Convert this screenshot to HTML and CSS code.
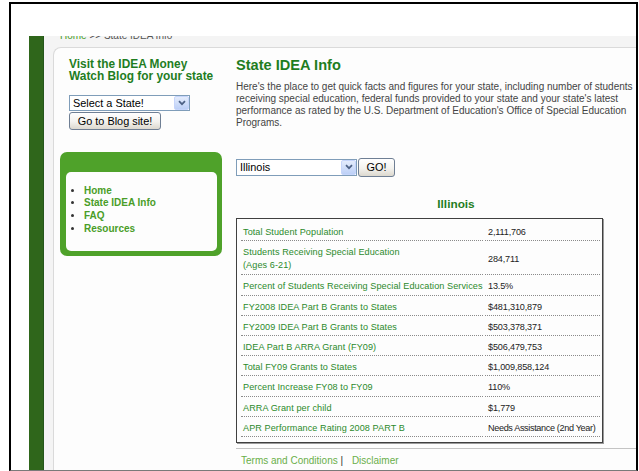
FILE: index.html
```html
<!DOCTYPE html>
<html lang="en">
<head>
<meta charset="utf-8">
<title>State IDEA Info</title>
<link rel="stylesheet" href="styles.css">
</head>
<body>
<div class="frame">
  <div class="blank"></div>
  <div class="page">
    <div class="rail"></div>
    <div class="site">
      <div class="crumb"><a href="#">Home</a> &gt;&gt; State IDEA Info</div>
      <div class="panel">
        <aside class="side">
          <h2 class="blog-title">Visit the IDEA Money Watch Blog for your state</h2>
          <div class="combo combo-side">
            <span class="combo-text">Select a State!</span>
            <span class="drop"><svg width="8" height="6" viewBox="0 0 8 6"><path d="M1 1.2 L4 4.2 L7 1.2" fill="none" stroke="#4d6185" stroke-width="1.7"/></svg></span>
          </div>
          <button class="btn btn-blog" type="button">Go to Blog site!</button>
          <nav class="menu">
            <div class="menu-inner">
              <ul>
                <li><a href="#">Home</a></li>
                <li><a href="#">State IDEA Info</a></li>
                <li><a href="#">FAQ</a></li>
                <li><a href="#">Resources</a></li>
              </ul>
            </div>
          </nav>
        </aside>
        <main class="main">
          <h1 class="title">State IDEA Info</h1>
          <p class="intro">Here's the place to get quick facts and figures for your state, including number of students receiving special education, federal funds provided to your state and your state's latest performance as rated by the U.S. Department of Education's Office of Special Education Programs.</p>
          <div class="picker">
            <div class="combo combo-main">
              <span class="combo-text">Illinois</span>
              <span class="drop"><svg width="8" height="6" viewBox="0 0 8 6"><path d="M1 1.2 L4 4.2 L7 1.2" fill="none" stroke="#4d6185" stroke-width="1.7"/></svg></span>
            </div>
            <button class="btn btn-go" type="button">GO!</button>
          </div>
          <h3 class="state-name">Illinois</h3>
          <div class="facts">
            <div class="cell lbl">Total Student Population</div>
            <div class="cell val">2,111,706</div>
            <div class="cell lbl">Students Receiving Special Education<br>(Ages 6-21)</div>
            <div class="cell val">284,711</div>
            <div class="cell lbl">Percent of Students Receiving Special Education Services</div>
            <div class="cell val">13.5%</div>
            <div class="cell lbl">FY2008 IDEA Part B Grants to States</div>
            <div class="cell val">$481,310,879</div>
            <div class="cell lbl">FY2009 IDEA Part B Grants to States</div>
            <div class="cell val">$503,378,371</div>
            <div class="cell lbl">IDEA Part B ARRA Grant (FY09)</div>
            <div class="cell val">$506,479,753</div>
            <div class="cell lbl">Total FY09 Grants to States</div>
            <div class="cell val">$1,009,858,124</div>
            <div class="cell lbl">Percent Increase FY08 to FY09</div>
            <div class="cell val">110%</div>
            <div class="cell lbl">ARRA Grant per child</div>
            <div class="cell val">$1,779</div>
            <div class="cell lbl">APR Performance Rating 2008 PART B</div>
            <div class="cell val val-long">Needs Assistance (2nd Year)</div>
          </div>
          <div class="foot"><a href="#">Terms and Conditions</a> | <a href="#" class="foot-second">Disclaimer</a></div>
        </main>
      </div>
    </div>
  </div>
</div>
</body>
</html>
```
FILE: styles.css
```css
* { box-sizing: border-box; }

body {
  margin: 0;
  background: #fff;
  font-family: "Liberation Sans", Arial, sans-serif;
}

a { text-decoration: none; }

/* window frame around the page */
.frame {
  margin: 2px 0 0 9px;
  width: 629px;
  height: 469px;
  border: 2px solid #000;
  border-bottom: 1px solid #7a7a7a;
  background: #fff;
  overflow: hidden;
  display: flex;
  flex-direction: column;
}

.blank { height: 32px; flex: none; }

.page {
  flex: 1;
  min-height: 0;
  display: flex;
  margin-left: 18px;
}

.rail {
  width: 15px;
  flex: none;
  background: #2f661b;
  box-shadow: inset -1px 0 #24561a;
}

.site {
  flex: none;
  width: 720px;
  background: #f4f4f4;
  padding-left: 9px;
  display: flex;
  flex-direction: column;
  overflow: hidden;
}

.crumb {
  flex: none;
  margin-top: -6px;
  height: 17px;
  padding-left: 7px;
  font-size: 10px;
  line-height: 12px;
  color: #555;
}
.crumb a { color: #4a9d28; }

.panel {
  flex: 1;
  display: flex;
  align-items: flex-start;
  padding-left: 6px;
  background: #fdfdfd;
  border-top: 1px solid #dadada;
  border-left: 1px solid #dadada;
  border-top-left-radius: 8px;
}

/* left column */
.side {
  width: 162px;
  flex: none;
  padding-top: 10px;
}

.blog-title {
  margin: 0 0 0 9px;
  font-size: 11.9px;
  line-height: 12px;
  font-weight: bold;
  color: #1f7d1f;
}

.combo {
  display: flex;
  align-items: center;
  width: 121px;
  background: #fff;
  border: 1px solid #7f9db9;
  font-size: 10.9px;
  color: #000;
  padding-left: 3px;
}
.combo-text { flex: 1; }
.combo-side { height: 16px; margin: 13px 0 0 9px; }
.combo-main { height: 17px; }

.drop {
  width: 15px;
  height: 100%;
  display: flex;
  align-items: center;
  justify-content: center;
  background: linear-gradient(#e4ecfc, #bdd0f7);
  border: 1px solid #c6d5fb;
  border-radius: 2px;
}

.btn {
  display: block;
  height: 18px;
  padding: 0;
  font-family: "Liberation Sans", Arial, sans-serif;
  font-size: 10.9px;
  color: #000;
  border: 1px solid #6f7f94;
  border-radius: 3px;
  background: linear-gradient(#ffffff, #f3f2ee 55%, #dcd8ce);
}
.btn-blog { width: 92px; margin: 1px 0 0 9px; }
.btn-go { width: 37px; height: 19px; }

.menu {
  margin-top: 22px;
  width: 162px;
  background: #4fa22a;
  border-radius: 7px;
  padding: 20px 5px 5px 6px;
}
.menu-inner {
  background: #fdfdfd;
  border-radius: 5px;
  padding: 12.5px 0 15px;
}
.menu ul {
  margin: 0;
  padding-left: 18px;
  list-style: disc;
}
.menu li {
  font-size: 10px;
  line-height: 12.9px;
  font-weight: bold;
  color: #333;
}
.menu a { color: #4a9d28; }

/* main column */
.main {
  width: 440px;
  flex: none;
  margin-left: 14px;
  padding-top: 9px;
}

.title {
  margin: 0;
  font-size: 14.6px;
  line-height: 17px;
  font-weight: bold;
  color: #1f7d1f;
}

.intro {
  margin: 6.5px 0 0;
  width: 404px;
  font-size: 10px;
  line-height: 12.3px;
  color: #444;
}

.picker {
  margin-top: 28px;
  display: flex;
  align-items: center;
  gap: 1px;
}

.state-name {
  margin: 20px 0 7px;
  text-align: center;
  font-size: 11.8px;
  line-height: 14px;
  font-weight: bold;
  color: #1f7d1f;
}

.facts {
  width: 367px;
  display: grid;
  grid-template-columns: 242px 115px;
  column-gap: 2px;
  padding: 2px 2px 5px 4px;
  border: 1px solid #404040;
  box-shadow: 1px 1px 0 #9a9a9a;
}

.cell {
  padding: 5px 0 1px 2px;
  font-size: 9.1px;
  line-height: 13.2px;
  white-space: nowrap;
  border-bottom: 1px dotted #8a8a8a;
}
.lbl { color: #2b8a2b; letter-spacing: 0.08px; }
.lbl:nth-child(3) { padding-bottom: 2px; }
.val {
  display: flex;
  align-items: center;
  padding-left: 3px;
  color: #222;
  letter-spacing: -0.15px;
}
.val-long { letter-spacing: -0.35px; }

.foot {
  margin-top: 5px;
  border-top: 1px solid #c4c4c4;
  padding: 6px 0 0 5px;
  font-size: 10px;
  line-height: 12px;
  color: #333;
}
.foot a { color: #6aaf49; }
.foot-second { margin-left: 6px; }
```
